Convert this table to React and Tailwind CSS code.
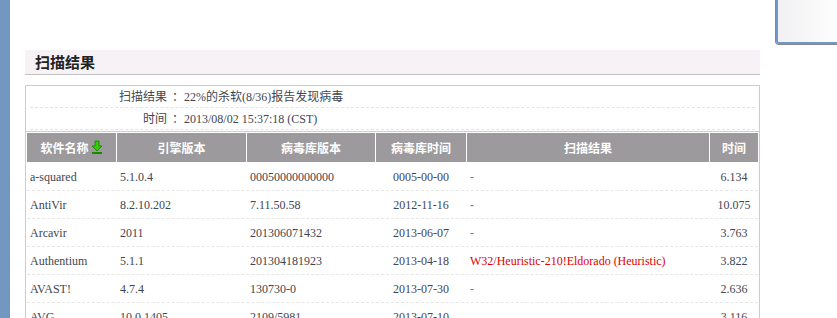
import React from 'react';

const rows = [
  ['a-squared', '5.1.0.4', '00050000000000', '0005-00-00', '-', '6.134'],
  ['AntiVir', '8.2.10.202', '7.11.50.58', '2012-11-16', '-', '10.075'],
  ['Arcavir', '2011', '201306071432', '2013-06-07', '-', '3.763'],
  ['Authentium', '5.1.1', '201304181923', '2013-04-18', 'W32/Heuristic-210!Eldorado (Heuristic)', '3.822'],
  ['AVAST!', '4.7.4', '130730-0', '2013-07-30', '-', '2.636'],
  ['AVG', '10.0.1405', '2109/5981', '2013-07-10', '', '3.116'],
];

const cols = 'grid grid-cols-[89px_129px_128px_90px_242px_48px] gap-x-[1px]';

const SortArrow = () => (
  <svg width="12" height="14" viewBox="0 0 12 14" className="inline-block ml-[2px] -mt-[1px] align-middle">
    <path d="M4 1h4v5h3L6 11 1 6h3z" fill="#33cc00" stroke="#1a7a00" strokeWidth="0.8" />
    <rect x="1" y="12" width="10" height="2" fill="#1a8a00" />
  </svg>
);

const InfoRow = ({ label, children }) => (
  <div className="flex items-center h-[22px] border-b border-dashed border-[#e3e3e3] mx-[4px]">
    <span className="w-[137px] text-right">{label}</span>
    <span className="ml-[5px] mr-[1px] w-[11px]">：</span>
    <span>{children}</span>
  </div>
);

export default function App() {
  return (
    <div className="relative flex h-[318px] w-[837px] overflow-hidden bg-white text-[12px] text-[#3f4652] font-['Liberation_Serif','Noto_Sans_CJK_SC',serif]">
      <div className="w-[10px] shrink-0 bg-[#7398c0]" />

      <div className="pl-[15px] pt-[50px]">
        <div className="w-[735px] h-[25px] bg-[#f6f2f5] border-b border-[#c2c0c2] pl-[10px] flex items-center">
          <h2 className="text-[15px] font-bold text-[#222] font-['Noto_Sans_CJK_SC',sans-serif]">扫描结果</h2>
        </div>

        <div className="mt-[10px] w-[735px] border border-[#cccccc]">
          <InfoRow label="扫描结果">22%的杀软(8/36)报告发现病毒</InfoRow>
          <InfoRow label="时间">2013/08/02 15:37:18 (CST)</InfoRow>

          <div className="mt-[1px] border-t border-[#cccccc] p-[1px]">
            <div className={`${cols} h-[29px] items-center text-white font-bold font-['Noto_Sans_CJK_SC',sans-serif]`}>
              <div className="bg-[#9c9a9d] h-full flex items-center justify-center">软件名称<SortArrow /></div>
              <div className="bg-[#9c9a9d] h-full flex items-center justify-center">引擎版本</div>
              <div className="bg-[#9c9a9d] h-full flex items-center justify-center">病毒库版本</div>
              <div className="bg-[#9c9a9d] h-full flex items-center justify-center">病毒库时间</div>
              <div className="bg-[#9c9a9d] h-full flex items-center justify-center">扫描结果</div>
              <div className="bg-[#9c9a9d] h-full flex items-center justify-center">时间</div>
            </div>

            <div className="mt-[1px]">
              {rows.map((r) => (
                <div key={r[0]} className={`${cols} h-[28px] items-center border-b border-dashed border-[#e6e6e6]`}>
                  <div className="pl-[3px]">{r[0]}</div>
                  <div className="pl-[3px]">{r[1]}</div>
                  <div className="pl-[3px]">{r[2]}</div>
                  <div className="text-center">{r[3]}</div>
                  <div className={r[4] === '-' ? 'pl-[3px] font-bold text-[#6aa300]' : 'pl-[3px] text-[#e00000]'}>{r[4]}</div>
                  <div className="text-center">{r[5]}</div>
                </div>
              ))}
            </div>
          </div>
        </div>
      </div>

      <div className="absolute left-[775px] top-[-6px] w-[70px] h-[51px] rounded-bl-[4px] border-l border-b border-[#888] bg-white">
        <div className="h-full w-full rounded-bl-[3px] border-l-2 border-b-2 border-[#6f97cc] bg-gradient-to-r from-[#f1f1f3] to-white" />
      </div>
    </div>
  );
}
